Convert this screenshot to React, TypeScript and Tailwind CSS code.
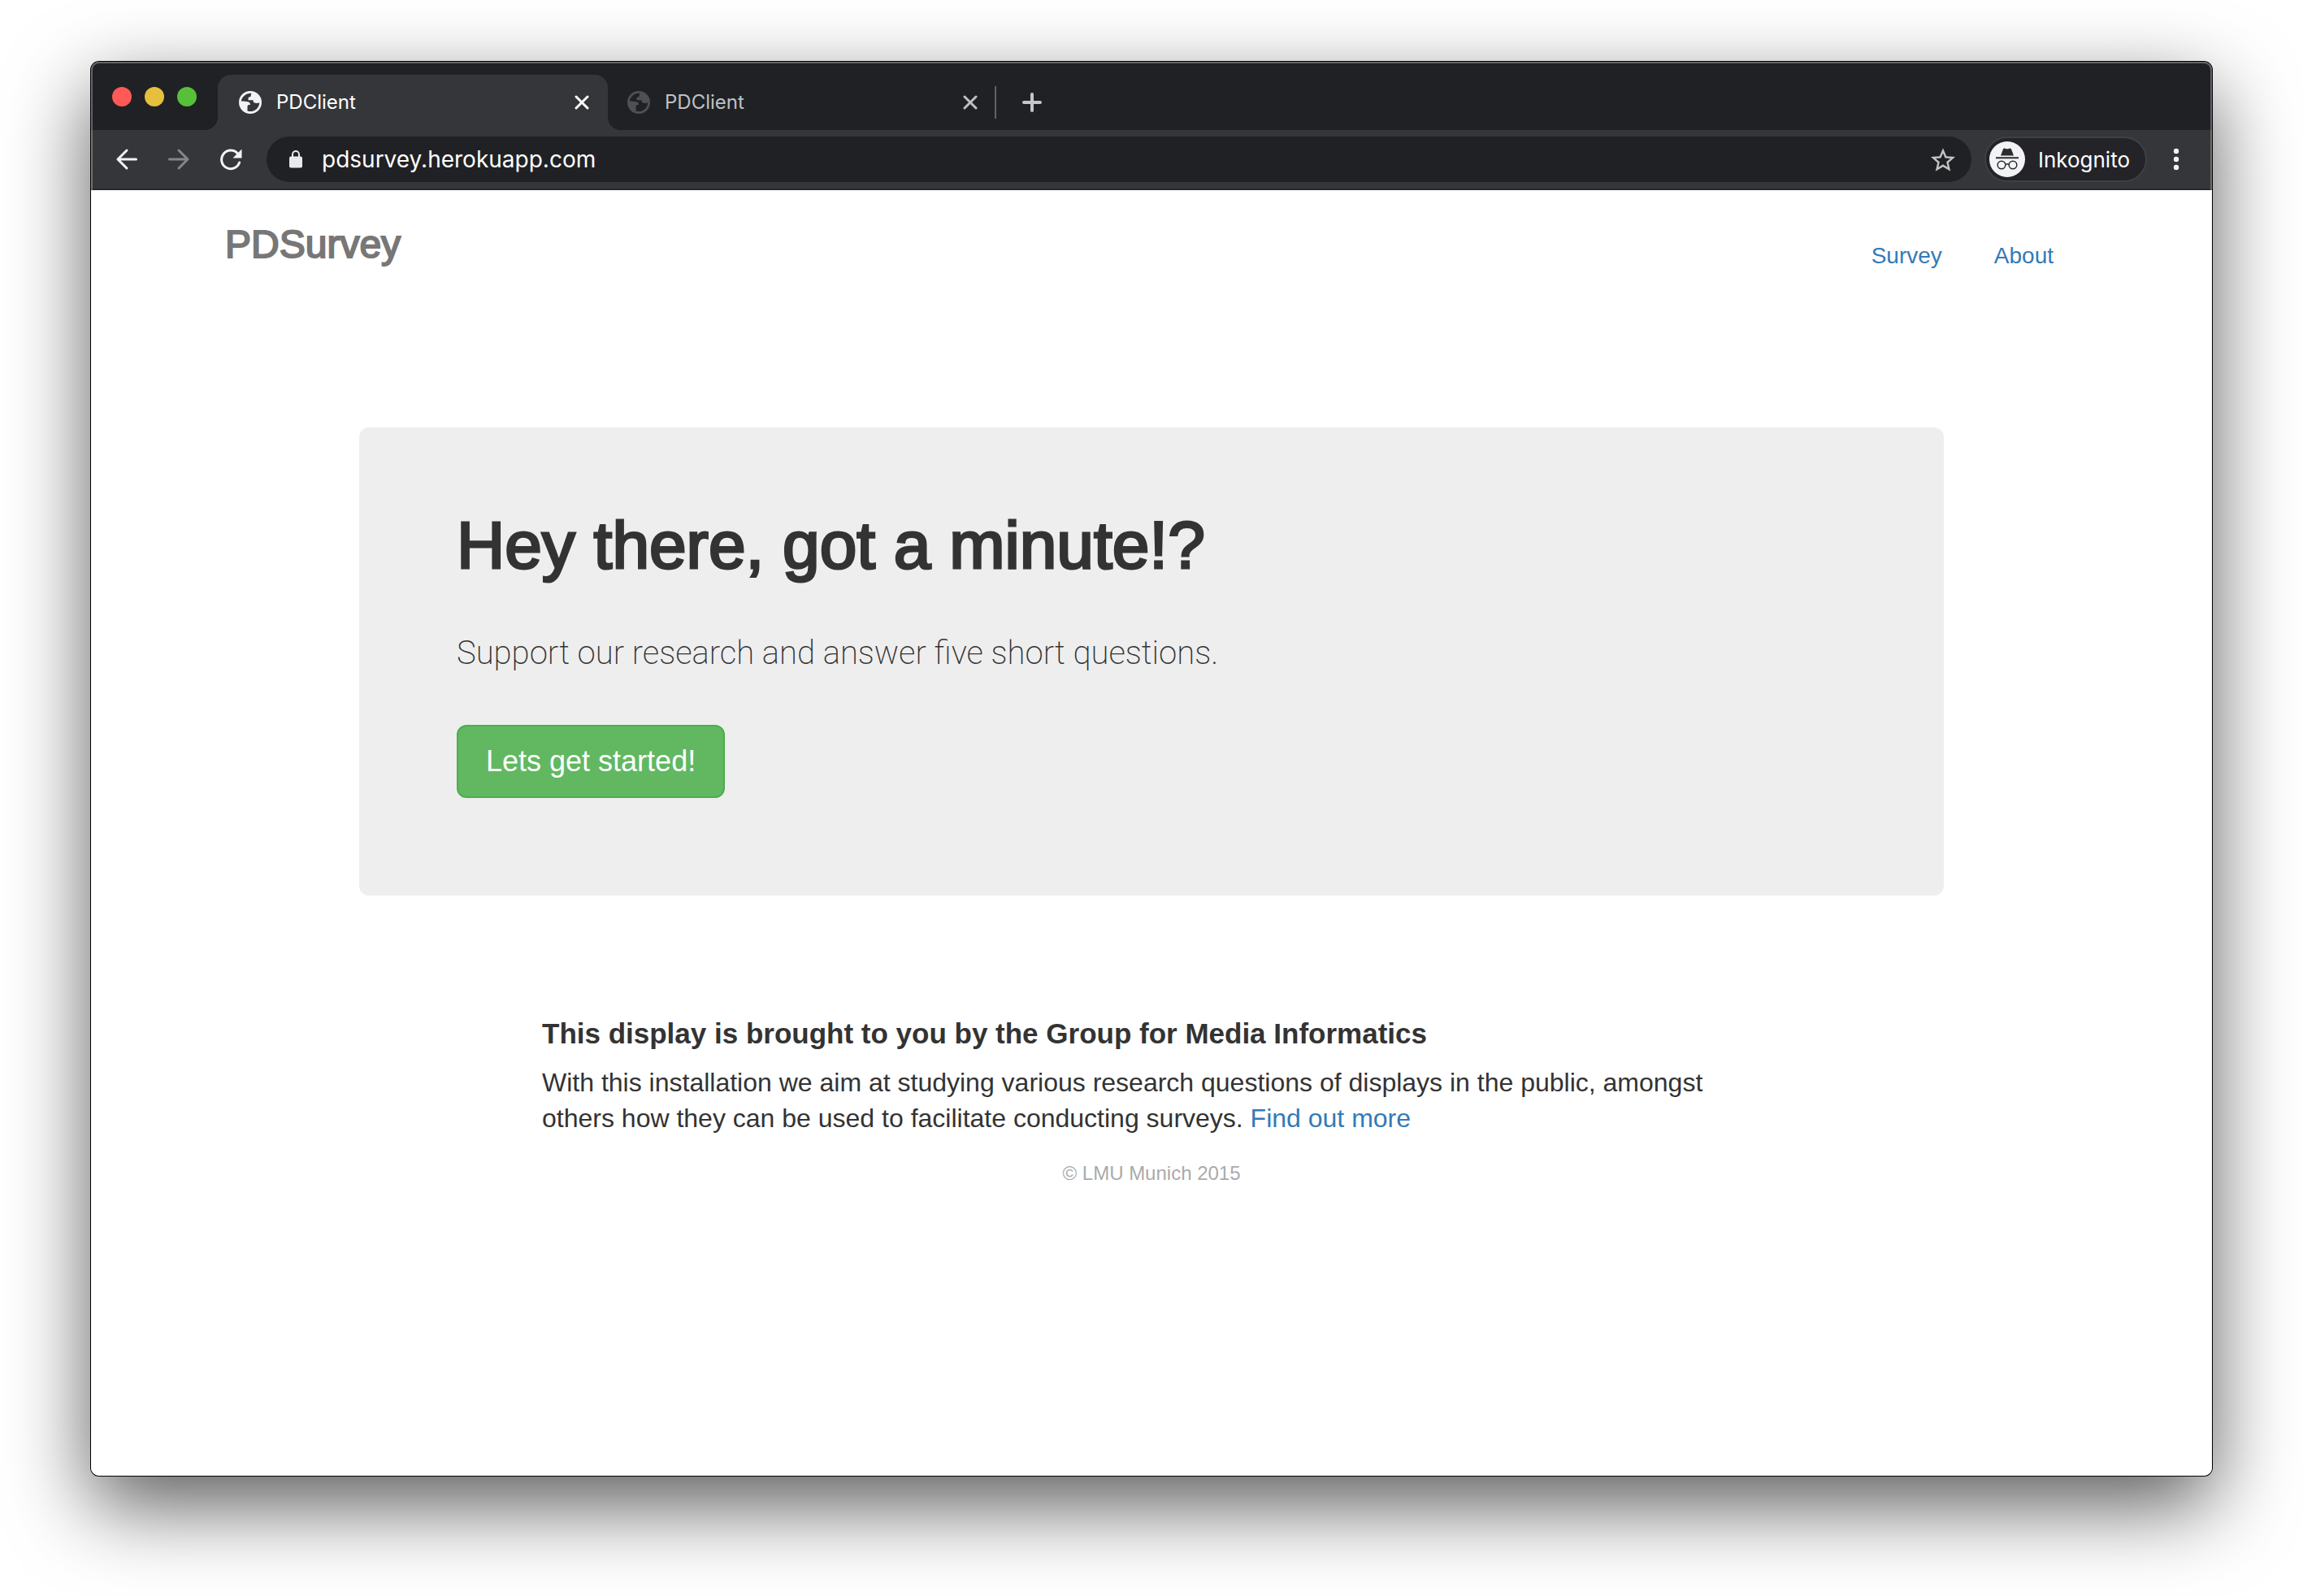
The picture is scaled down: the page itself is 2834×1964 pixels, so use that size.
import React from "react";

function Globe({ className }: { className: string }) {
  return (
    <svg viewBox="0 0 28 28" className={className} aria-hidden="true">
      <path
        fill="currentColor"
        fillRule="evenodd"
        d="M14 0a14 14 0 1 1 0 28a14 14 0 0 1 0-28zM15.500 2.800C9 2.300 3.500 7 2.800 12.600C6 12.600 9 12.900 11 13.200C13.200 13.600 14 15 14 17H12.500C11 17 10.500 18 10.500 19.500V24.500C18 27 25.200 21.500 25.200 14.200C23.500 15.200 20.500 15.200 18.500 14.200C17.500 13.700 17.800 12.500 17.500 11.300H11.500C11 8.500 12 7 14.500 7C14.800 5.500 14.700 4 15.500 2.800z"
      />
    </svg>
  );
}

function Tab({ active }: { active?: boolean }) {
  return (
    <div
      className={
        active
          ? "relative flex h-[68px] w-[480px] items-center rounded-t-2xl bg-[#35363a] pr-[23px] pl-[26px] text-white"
          : "flex h-[68px] w-[476px] items-center pr-[21px] pl-6 text-[#bdc1c6]"
      }
    >
      {active && (
        <>
          <span className="absolute bottom-0 -left-4 size-4 bg-[radial-gradient(circle_at_0_0,transparent_16px,#35363a_16px)]" />
          <span className="absolute -right-4 bottom-0 size-4 bg-[radial-gradient(circle_at_100%_0,transparent_16px,#35363a_16px)]" />
        </>
      )}
      <button className="flex flex-1 items-center gap-[18px] text-left text-2xl">
        <Globe className={active ? "size-7 text-[#f1f3f4]" : "size-7 text-[#4d5054]"} />
        PDClient
      </button>
      <button aria-label="Close tab">
        <svg viewBox="0 0 18 18" className="size-[18px]" fill="none" stroke="currentColor" strokeWidth="3" strokeLinecap="round">
          <path d="M2 2l14 14M16 2L2 16" />
        </svg>
      </button>
    </div>
  );
}

function TabStrip() {
  return (
    <div className="flex h-[84px] items-end bg-[#202124]">
      <div className="flex h-[82px] w-[156px] items-center gap-4 pl-[26px]">
        <button aria-label="Close window" className="size-6 rounded-full bg-[#ff5a56]" />
        <button aria-label="Minimize window" className="size-6 rounded-full bg-[#e6c03c]" />
        <button aria-label="Zoom window" className="size-6 rounded-full bg-[#57c038]" />
      </div>
      <Tab active />
      <Tab />
      <div className="flex h-[68px] items-center gap-8 text-[#c3c6ca]">
        <span className="h-10 w-0.5 bg-[#5f6368]" />
        <button aria-label="New tab">
          <svg viewBox="0 0 24 24" className="size-6" fill="none" stroke="currentColor" strokeWidth="4" strokeLinecap="round">
            <path d="M12 2v20M2 12h20" />
          </svg>
        </button>
      </div>
    </div>
  );
}

function Toolbar() {
  return (
    <div className="flex h-[74px] items-center border-b-2 border-[#28292c] bg-[#35363a] pr-10 pl-[30px] text-[#f1f3f4]">
      <div className="flex w-[186px] items-center gap-9">
        <button aria-label="Back">
          <svg viewBox="0 0 28 28" className="size-7" fill="none" stroke="currentColor" strokeWidth="3" strokeLinecap="round" strokeLinejoin="round">
            <path d="M25.500 14H3M14 3L3 14l11 11" />
          </svg>
        </button>
        <button aria-label="Forward" className="text-[#85868a]">
          <svg viewBox="0 0 28 28" className="size-7" fill="none" stroke="currentColor" strokeWidth="3" strokeLinecap="round" strokeLinejoin="round">
            <path d="M2.500 14H25M14 3l11 11l-11 11" />
          </svg>
        </button>
        <button aria-label="Reload">
          <svg viewBox="0 0 28 28" className="size-7" fill="none" stroke="currentColor" strokeWidth="3" strokeLinecap="round">
            <path d="M22.500 7A11.300 11.300 0 1 0 24.600 18" />
            <path fill="currentColor" stroke="none" d="M27.500 1.500v11H16.500z" />
          </svg>
        </button>
      </div>
      <div className="flex h-14 flex-1 items-center rounded-full bg-[#202124] pr-5 pl-7">
        <svg viewBox="0 0 16 22" className="mr-6 h-[22px] w-4 text-[#e8eaed]" aria-hidden="true">
          <rect x="0" y="7.500" width="16" height="14" rx="2" fill="currentColor" />
          <path d="M4 9V5a4 4 0 0 1 8 0v4" fill="none" stroke="currentColor" strokeWidth="2" />
        </svg>
        <input
          aria-label="Address"
          defaultValue="pdsurvey.herokuapp.com"
          className="min-w-0 flex-1 bg-transparent text-[28px] leading-10 text-white outline-none"
        />
        <button aria-label="Bookmark this page" className="text-[#c4c4c4]">
          <svg viewBox="2 2 20 19" className="h-[29px] w-[30px]" fill="currentColor">
            <path d="M22 9.240l-7.190-.62L12 2 9.190 8.630 2 9.240l5.460 4.730L5.820 21 12 17.270 18.180 21l-1.630-7.030L22 9.240zM12 15.400l-3.760 2.270 1-4.280-3.320-2.880 4.380-.38L12 6.100l1.710 4.040 4.380.38-3.320 2.880 1 4.280L12 15.400z" />
          </svg>
        </button>
      </div>
      <button className="ml-4 flex h-14 items-center gap-4 rounded-full border-2 border-[#3f4044] bg-[#242428] pr-[19px] pl-1 text-[26px] text-white">
        <svg viewBox="0 0 44 44" className="size-11" aria-hidden="true">
          <circle cx="22" cy="22" r="22" fill="#f1f3f4" />
          <path fill="#2b2c30" d="M17 9.500q1-1.500 2.500-.8q2.500 1 5 0q1.500-.7 2.500.8L30 17.500H14zM8 19.200h28v2H8z" />
          <g fill="none" stroke="#2b2c30" strokeWidth="1.500">
            <circle cx="15" cy="29" r="4.800" />
            <circle cx="29" cy="29" r="4.800" />
            <path d="M19.800 28.500q2.200-1.500 4.400 0" />
          </g>
        </svg>
        Inkognito
      </button>
      <button aria-label="Menu" className="ml-8">
        <svg viewBox="0 0 8 28" className="h-7 w-2" fill="currentColor">
          <circle cx="4" cy="4" r="3.200" />
          <circle cx="4" cy="14" r="3.200" />
          <circle cx="4" cy="24" r="3.200" />
        </svg>
      </button>
    </div>
  );
}

function Page() {
  return (
    <div className="flex-1 bg-white px-4 font-['Liberation_Sans',Arial,sans-serif] text-[#333]">
      <header className="mx-auto flex max-w-[2280px] items-start justify-between pt-10">
        <h3 className="text-[48px] leading-[54px] text-[#777] [-webkit-text-stroke:2px_#777]">PDSurvey</h3>
        <nav className="flex gap-1 text-[28px] leading-[42px] text-[#337ab7]">
          <a href="#survey" className="px-[30px] py-5">Survey</a>
          <a href="#about" className="px-[30px] py-5">About</a>
        </nav>
      </header>
      <main className="mx-auto mt-[170px] flex max-w-[1950px] flex-col items-start rounded-xl bg-[#eee] px-[120px] pt-[100px] pb-[120px]">
        <h1 className="text-[82px] leading-[90px] [-webkit-text-stroke:3px_#333]">Hey there, got a minute!?</h1>
        <p className="mt-[58px] font-['Roboto',sans-serif] text-[40px] leading-[60px] font-extralight">
          Support our research and answer five short questions.
        </p>
        <button className="mt-[58px] rounded-xl border-2 border-[#4cae4c] bg-[#61b861] px-[34px] py-5 text-[36px] leading-[46px] text-white">
          Lets get started!
        </button>
      </main>
      <footer className="mx-auto mt-[150px] max-w-[1500px]">
        <h4 className="text-[35px] leading-10 font-bold">
          This display is brought to you by the Group for Media Informatics
        </h4>
        <p className="mt-[18px] text-[32px] leading-11">
          With this installation we aim at studying various research questions of displays in the public, amongst
          others how they can be used to facilitate conducting surveys.{" "}
          <a href="#more" className="text-[#337ab7]">Find out more</a>
        </p>
        <p className="mt-[30px] text-center text-2xl text-[#aaa]">© LMU Munich 2015</p>
      </footer>
    </div>
  );
}

export default function App() {
  return (
    <div className="flex min-h-screen bg-white px-28 pt-[76px] pb-[148px] font-['Inter',sans-serif]">
      <div className="relative flex flex-1 flex-col overflow-hidden rounded-[10px] shadow-[0_0_0_1px_#000,0_36px_100px_rgba(0,0,0,0.65)]">
        <TabStrip />
        <Toolbar />
        <Page />
        <div className="pointer-events-none absolute inset-x-0 top-0 h-[158px] rounded-t-[10px] border-x-2 border-t-2 border-white/30" />
      </div>
    </div>
  );
}
